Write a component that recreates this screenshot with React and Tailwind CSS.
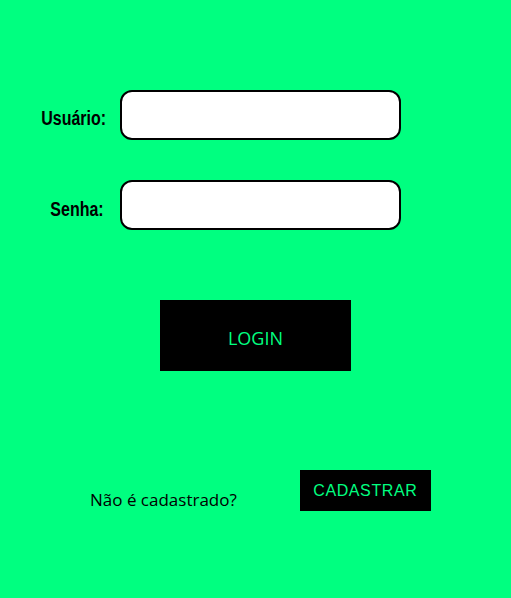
export default function App() {
  return (
    <div className="w-[511px] h-[598px] bg-[#00ff80] flex flex-col pt-[90px]">
      <div className="flex items-center h-[50px]">
        <div className="w-[106px] flex justify-end">
          <span className="inline-block origin-right scale-x-[0.8] text-[20px] font-bold text-black leading-none font-['Liberation_Sans',sans-serif] pt-[5px]">
            Usuário:
          </span>
        </div>
        <input className="ml-[14px] w-[281px] h-[50px] bg-white border-2 border-black rounded-[12px] outline-none px-3" />
      </div>
      <div className="flex items-center h-[50px] mt-[40px]">
        <div className="w-[104px] flex justify-end">
          <span className="inline-block origin-right scale-x-[0.8] text-[20px] font-bold text-black leading-none font-['Liberation_Sans',sans-serif] pt-[7px]">
            Senha:
          </span>
        </div>
        <input type="password" className="ml-[16px] w-[281px] h-[50px] bg-white border-2 border-black rounded-[12px] outline-none px-3" />
      </div>
      <div className="flex justify-center mt-[70px]">
        <button className="w-[191px] h-[71px] bg-black text-[#00ff80] text-[18px] font-medium font-['Open_Sans',sans-serif] flex items-center justify-center pt-[5px]">
          LOGIN
        </button>
      </div>
      <div className="flex items-end mt-[99px] pl-[90px]">
        <span className="text-[17px] text-black font-['Open_Sans',sans-serif] leading-[24px] mb-[-1px]">Não é cadastrado?</span>
        <button className="ml-[63px] w-[131px] h-[41px] bg-black text-[#00ff80] text-[16px] tracking-[0.6px] font-['Liberation_Sans',sans-serif] flex items-center justify-center">
          CADASTRAR
        </button>
      </div>
    </div>
  );
}
